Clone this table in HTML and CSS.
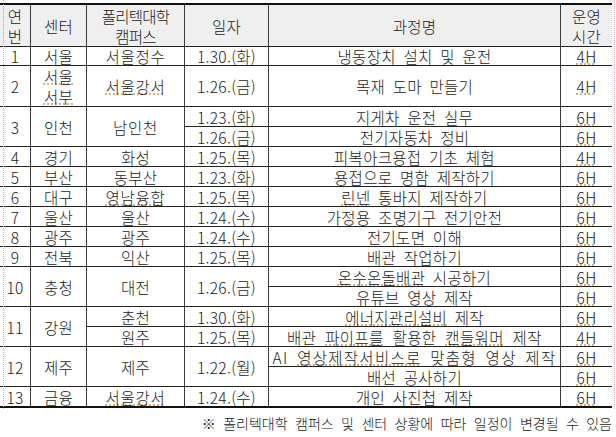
FILE: index.html
```html
<!DOCTYPE html>
<html lang="ko">
<head>
<meta charset="utf-8">
<title>일정표</title>
<link rel="stylesheet" href="styles.css">
</head>
<body>
<div class="page">
  <table class="sched">
    <thead>
      <tr class="head">
        <th class="c1">연<br>번</th>
        <th class="c2">센터</th>
        <th class="c3 tight">폴리텍대학<br>캠퍼스</th>
        <th class="c4">일자</th>
        <th class="c5">과정명</th>
        <th class="c6">운영<br>시간</th>
      </tr>
    </thead>
    <tbody>
      <tr class="r1">
        <td>1</td><td>서울</td><td class="wide">서울정수</td><td>1.30.(화)</td><td>냉동장치 설치 및 운전</td><td><span class="sp">4H</span></td>
      </tr>
      <tr class="r2">
        <td>2</td><td class="two"><span class="sp">서울</span><br><span class="sp">서부</span></td><td class="wide"><span class="sp">서울강서</span></td><td>1.26.(금)</td><td>목재 도마 만들기</td><td><span class="sp">4H</span></td>
      </tr>
      <tr class="r">
        <td rowspan="2">3</td><td rowspan="2">인천</td><td rowspan="2" class="wide">남인천</td><td>1.23.(화)</td><td>지게차 운전 실무</td><td><span class="sp">6H</span></td>
      </tr>
      <tr class="r">
        <td>1.26.(금)</td><td>전기자동차 정비</td><td><span class="sp">6H</span></td>
      </tr>
      <tr class="r">
        <td>4</td><td>경기</td><td>화성</td><td>1.25.(목)</td><td>피복아크용접 기초 체험</td><td><span class="sp">4H</span></td>
      </tr>
      <tr class="r">
        <td>5</td><td>부산</td><td>동부산</td><td>1.23.(화)</td><td>용접으로 명함 제작하기</td><td><span class="sp">6H</span></td>
      </tr>
      <tr class="r">
        <td>6</td><td>대구</td><td class="wide"><span class="sp">영남융합</span></td><td>1.25.(목)</td><td><span class="sp">린넨</span> 통바지 제작하기</td><td><span class="sp">6H</span></td>
      </tr>
      <tr class="r">
        <td>7</td><td>울산</td><td>울산</td><td>1.24.(수)</td><td>가정용 조명기구 전기안전</td><td><span class="sp">6H</span></td>
      </tr>
      <tr class="r">
        <td>8</td><td>광주</td><td>광주</td><td>1.24.(수)</td><td>전기도면 이해</td><td><span class="sp">6H</span></td>
      </tr>
      <tr class="r">
        <td>9</td><td>전북</td><td>익산</td><td>1.25.(목)</td><td>배관 작업하기</td><td><span class="sp">6H</span></td>
      </tr>
      <tr class="r">
        <td rowspan="2">10</td><td rowspan="2">충청</td><td rowspan="2">대전</td><td rowspan="2">1.26.(금)</td><td><span class="sp">온수온돌배관</span> 시공하기</td><td><span class="sp">6H</span></td>
      </tr>
      <tr class="r">
        <td>유튜브 영상 제작</td><td><span class="sp">6H</span></td>
      </tr>
      <tr class="r">
        <td rowspan="2">11</td><td rowspan="2">강원</td><td>춘천</td><td>1.30.(화)</td><td><span class="sp">에너지관리설비</span> 제작</td><td><span class="sp">6H</span></td>
      </tr>
      <tr class="r">
        <td>원주</td><td>1.25.(목)</td><td class="mid">배관 <span class="sp">파이프를</span> 활용한 <span class="sp">캔들워머</span> 제작</td><td><span class="sp">4H</span></td>
      </tr>
      <tr class="r">
        <td rowspan="2">12</td><td rowspan="2">제주</td><td rowspan="2">제주</td><td rowspan="2">1.22.(월)</td><td class="spread">AI <span class="sp">영상제작서비스로</span> 맞춤형 영상 제작</td><td><span class="sp">6H</span></td>
      </tr>
      <tr class="r">
        <td>배선 공사하기</td><td><span class="sp">6H</span></td>
      </tr>
      <tr class="r last">
        <td>13</td><td>금융</td><td class="wide"><span class="sp">서울강서</span></td><td>1.24.(수)</td><td>개인 사진첩 제작</td><td><span class="sp">6H</span></td>
      </tr>
    </tbody>
  </table>
  <p class="note">※ 폴리텍대학 캠퍼스 및 센터 상황에 따라 일정이 변경될 수 있음</p>
</div>
</body>
</html>
```

FILE: styles.css
```css
* { box-sizing: border-box; }

html, body {
  margin: 0;
  padding: 0;
  background: #ffffff;
}

body {
  font-family: "Noto Sans CJK KR", "Noto Sans", sans-serif;
  color: #1a1a1a;
}

.page {
  position: relative;
  width: 616px;
  padding-top: 3px;
}

.page::before {
  content: "";
  position: absolute;
  left: 3px;
  top: 0;
  height: 409px;
  border-left: 1px dotted #b0b0b0;
}

.page::after {
  content: "";
  position: absolute;
  left: 614px;
  top: 0;
  height: 409px;
  border-left: 1px dotted #e2a8a8;
}

.sched {
  width: 612px;
  table-layout: fixed;
  border-collapse: separate;
  border-spacing: 0;
  border-top: 2px solid #111;
  font-size: 15.5px;
  font-weight: 300;
  letter-spacing: 0.3px;
  word-spacing: 3px;
}

.sched th,
.sched td {
  padding: 0;
  text-align: center;
  vertical-align: middle;
  font-weight: 300;
  border-right: 1px solid #3a3a3a;
  border-bottom: 1px solid #222;
  line-height: 18px;
  white-space: nowrap;
  overflow: visible;
}

.sched th:last-child,
.sched tr td:last-child {
  border-right: 0;
}

.head th {
  background: #efefef;
  line-height: 20px;
}

.c1 { width: 31px; }
.c2 { width: 56px; }
.c3 { width: 98px; }
.c4 { width: 84px; }
.c5 { width: 292px; }
.c6 { width: 51px; }

.head { height: 42px; }
.r1 { height: 19px; }
.r2 { height: 41px; }
.r { height: 20px; }

.sched .last td {
  border-bottom: 2px solid #111;
}
.last { height: 21px; }

.sched .wide { letter-spacing: 0.8px; }
.sched .tight { letter-spacing: -0.8px; }
.sched .mid { letter-spacing: 0.4px; word-spacing: 4px; }
.sched .spread { letter-spacing: 1.3px; word-spacing: 3px; }

.sched td.two { line-height: 20px; }

.sp {
  text-decoration: underline dotted #d09a55;
  text-underline-offset: 1px;
}

.note {
  margin: 6px 0 0;
  width: 612px;
  text-align: right;
  font-size: 14px;
  font-weight: 300;
  line-height: 18px;
  word-spacing: 3.5px;
  color: #1a1a1a;
}
```
